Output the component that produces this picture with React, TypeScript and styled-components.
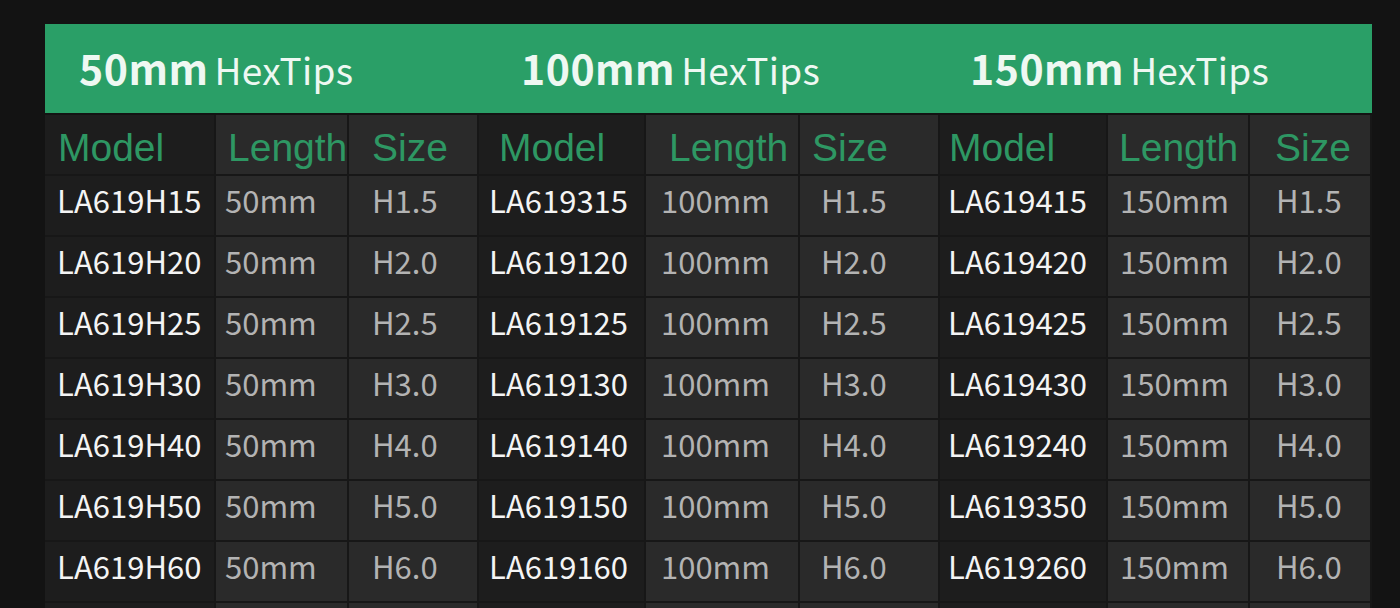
import React from "react";
import styled, { createGlobalStyle } from "styled-components";

const GlobalStyle = createGlobalStyle`
  html, body {
    margin: 0;
    padding: 0;
    background: #131313;
  }
  body {
    width: 1400px;
    height: 608px;
    overflow: hidden;
  }
`;

const Page = styled.div`
  width: 1400px;
  height: 608px;
  box-sizing: border-box;
  padding: 24px 0 0 45px;
  background: #131313;
  overflow: hidden;
`;

const Sheet = styled.div`
  width: 1327px;
`;

const Banner = styled.div`
  height: 89px;
  display: flex;
  align-items: center;
  padding: 0 0 3px 34px;
  background: #2a9f67;
  box-sizing: border-box;
  font-family: "Noto Sans CJK SC", "Noto Sans", sans-serif;
  color: #eef8f2;
`;

const BannerTitle = styled.div<{ $w: number }>`
  width: ${(p) => p.$w}px;
  flex: none;
  display: flex;
  align-items: baseline;
  gap: 6px;
`;

const Mm = styled.span`
  font-weight: 700;
  font-size: 41px;
  letter-spacing: 0.5px;
`;

const Tips = styled.span`
  font-weight: 400;
  font-size: 37px;
  letter-spacing: 0.3px;
`;

const Grid = styled.div`
  display: grid;
  grid-template-columns: 171px 133px 130px 167px 154px 140px 168px 142px 122px;
  grid-template-rows: 61px;
  grid-auto-rows: 61px;
  margin-top: 2px;
`;

const Cell = styled.div<{ $dark: boolean; $pad: number }>`
  box-sizing: border-box;
  display: flex;
  align-items: flex-start;
  padding: 2px 0 0 ${(p) => p.$pad}px;
  background: ${(p) => (p.$dark ? "#1d1d1d" : "#2a2a2a")};
  border-right: 2px solid #171717;
  border-bottom: 2px solid #171717;
  white-space: nowrap;
`;

const HeadCell = styled(Cell)`
  align-items: center;
  padding-top: 7px;
`;

const HeadLabel = styled.span`
  font-family: "Liberation Sans", Arial, sans-serif;
  font-size: 39px;
  color: #2e9763;
`;

const Value = styled.span<{ $main: boolean }>`
  font-family: "Noto Sans CJK SC", "Noto Sans", sans-serif;
  font-size: 31px;
  line-height: 44px;
  color: ${(p) => (p.$main ? "#f4f4f4" : "#b3b3b3")};
`;

type Col = { head: number; body: number; dark: boolean };

const cols: Col[] = [
  { head: 13, body: 12, dark: true },
  { head: 12, body: 9, dark: false },
  { head: 23, body: 23, dark: false },
  { head: 20, body: 10, dark: true },
  { head: 23, body: 15, dark: false },
  { head: 12, body: 21, dark: false },
  { head: 9, body: 8, dark: true },
  { head: 11, body: 12, dark: false },
  { head: 25, body: 26, dark: false },
];

const titles = [
  { mm: "50mm", w: 442 },
  { mm: "100mm", w: 449 },
  { mm: "150mm", w: 300 },
];

const heads = ["Model", "Length", "Size"];

const sizes = ["H1.5", "H2.0", "H2.5", "H3.0", "H4.0", "H5.0", "H6.0"];
const models = [
  ["LA619H15", "LA619H20", "LA619H25", "LA619H30", "LA619H40", "LA619H50", "LA619H60"],
  ["LA619315", "LA619120", "LA619125", "LA619130", "LA619140", "LA619150", "LA619160"],
  ["LA619415", "LA619420", "LA619425", "LA619430", "LA619240", "LA619350", "LA619260"],
];
const lengths = ["50mm", "100mm", "150mm"];

export default function App() {
  const rows: string[][] = sizes.map((size, r) =>
    [0, 1, 2].flatMap((g) => [models[g][r], lengths[g], size])
  );

  return (
    <Page>
      <GlobalStyle />
      <Sheet>
        <Banner>
          {titles.map((t) => (
            <BannerTitle key={t.mm} $w={t.w}>
              <Mm>{t.mm}</Mm>
              <Tips>HexTips</Tips>
            </BannerTitle>
          ))}
        </Banner>
        <Grid>
          {cols.map((c, i) => (
            <HeadCell key={`h${i}`} $dark={c.dark} $pad={c.head}>
              <HeadLabel>{heads[i % 3]}</HeadLabel>
            </HeadCell>
          ))}
          {rows.map((row, r) =>
            row.map((v, i) => (
              <Cell key={`${r}-${i}`} $dark={cols[i].dark} $pad={cols[i].body}>
                <Value $main={i % 3 === 0}>{v}</Value>
              </Cell>
            ))
          )}
          {cols.map((c, i) => (
            <Cell key={`t${i}`} $dark={c.dark} $pad={c.body} />
          ))}
        </Grid>
      </Sheet>
    </Page>
  );
}
